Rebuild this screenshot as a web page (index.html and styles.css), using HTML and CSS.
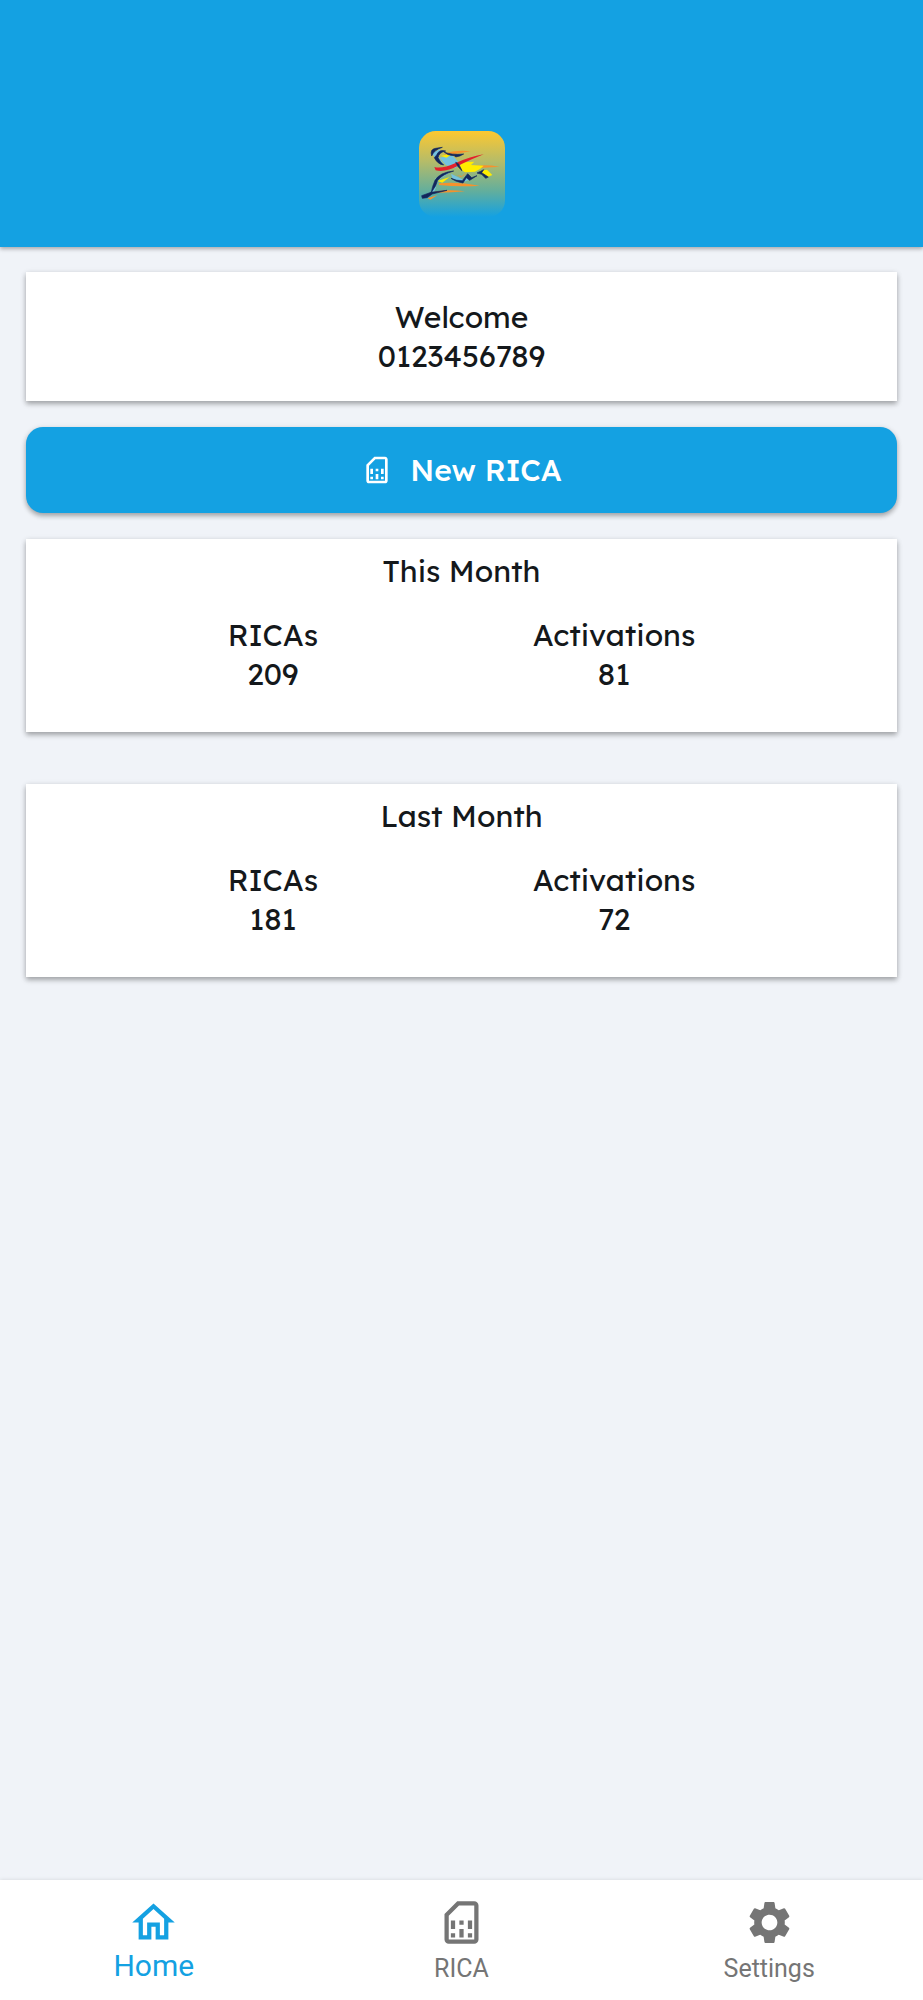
FILE: index.html
```html
<!DOCTYPE html>
<html lang="en">
  <head>
    <meta charset="utf-8">
    <meta name="viewport" content="width=device-width, initial-scale=1">
    <title>RICA</title>
    <link rel="stylesheet" href="styles.css">
  </head>
  <body>
    <div class="wrapper">

      <header class="header">
        <svg class="logo" viewBox="0 0 258 258" role="img" aria-label="Logo">
          <defs>
            <linearGradient id="logo_bg" x1="0" y1="0" x2="0" y2="1">
              <stop offset="0" stop-color="#fdc830"/>
              <stop offset=".35" stop-color="#b6bc68"/>
              <stop offset=".7" stop-color="#62ae9d"/>
              <stop offset="1" stop-color="#14a1e2"/>
            </linearGradient>
          </defs>
          <rect width="258" height="258" rx="50" fill="url(#logo_bg)"/>
          <!-- motion lines -->
          <g fill="#f6922c">
            <path d="M74 69 Q110 56 155 61 L90 72Z"/>
            <path d="M145 108 Q190 98 242 107 L170 112Z"/>
            <path d="M60 157 Q120 152 182 164 Q120 168 60 162Z"/>
            <path d="M46 182 Q90 174 138 181 Q90 186 46 185Z"/>
            <path d="M26 202 L56 192 L34 206Z"/>
          </g>
          <!-- body -->
          <g fill="#74c2df">
            <path d="M38 66 L64 54 L58 78 L76 102 L56 92Z"/>
            <path d="M62 80 L100 73 L124 100 L108 112 L80 102Z"/>
            <path d="M94 124 L58 146 L46 182 L36 180 L50 142 L74 126Z"/>
            <path d="M96 128 L136 148 L146 130 L152 146 L132 154 L100 142Z"/>
          </g>
          <g fill="#ffed00">
            <path d="M132 94 L166 92 L156 102 L194 104 L184 113 L168 122 L138 124 L116 110Z"/>
            <path d="M182 119 L204 116 L220 132 L206 138 L184 128Z"/>
            <path d="M56 150 L92 138 L70 155Z"/>
            <path d="M66 74 L100 69 L82 80Z"/>
          </g>
          <path d="M46 108 Q70 114 110 96 Q150 78 194 70 Q158 84 120 103 Q78 126 50 118Z" fill="#e3202b"/>
          <path d="M114 132 L126 138 L144 122 L132 136Z" fill="#f6922c"/>
          <g fill="#12265c" stroke="#12265c" stroke-width="2" stroke-linejoin="round">
            <path d="M38 75 Q32 54 50 52 L70 49 Q46 56 38 75Z"/>
            <path d="M53 72 Q60 54 80 60 Q60 64 57 80 Q64 94 74 102 Q56 100 46 80Z"/>
            <path d="M74 62 Q96 73 134 69 Q124 76 110 78 L106 74 Q86 74 74 62Z"/>
            <path d="M110 94 L118 98 Q124 108 129 119 Q116 110 110 94Z"/>
            <path d="M48 148 Q62 124 104 120 Q70 130 56 148 L50 164 L36 186 Q40 166 48 148Z"/>
            <path d="M36 184 L84 178 L40 189 L24 200 L10 202 L8 194Z"/>
            <path d="M96 142 Q112 150 130 149 L146 128 L158 140 L174 134 L152 148 L142 140 L132 156 Q108 152 96 142Z"/>
            <path d="M174 126 L194 116 L188 125 L208 138 L200 142 L188 130Z"/>
          </g>
        </svg>
      </header>

      <main class="content">
        <section class="card card_welcome">
          <div>Welcome</div>
          <div>0123456789</div>
        </section>

        <button type="button" class="btn_new">
          <svg class="btn_icon" viewBox="0 0 24 24" aria-hidden="true">
            <path fill="currentColor" fill-rule="evenodd" d="M18 2h-8L4 8v12c0 1.100.9 2 2 2h12c1.100 0 2-.9 2-2V4c0-1.100-.9-2-2-2zm0 2v16H6V8.830L10.830 4H18zM7 17h2v2H7zM15 17h2v2h-2zM7 11h2v4H7zM11 15h2v4h-2zM11 11h2v2h-2zM15 11h2v4h-2z"/>
          </svg>
          New RICA
        </button>

        <section class="card">
          <h2 class="card_title">This Month</h2>
          <div class="stats">
            <div class="stat">
              <div>RICAs</div>
              <div>209</div>
            </div>
            <div class="stat">
              <div>Activations</div>
              <div>81</div>
            </div>
          </div>
        </section>

        <section class="card card_last">
          <h2 class="card_title">Last Month</h2>
          <div class="stats">
            <div class="stat">
              <div>RICAs</div>
              <div>181</div>
            </div>
            <div class="stat">
              <div>Activations</div>
              <div>72</div>
            </div>
          </div>
        </section>
      </main>

      <nav class="tabs">
        <a href="#home" class="tab active" aria-current="page">
          <svg class="tab_icon" viewBox="0 0 24 24" aria-hidden="true">
            <path fill="currentColor" d="M12 5.690l5 4.500V18h-2v-6H9v6H7v-7.810l5-4.500M12 3L2 12h3v8h6v-6h2v6h6v-8h3L12 3z"/>
          </svg>
          <span class="tab_label">Home</span>
        </a>
        <a href="#rica" class="tab">
          <svg class="tab_icon" viewBox="0 0 24 24" aria-hidden="true">
            <path fill="currentColor" fill-rule="evenodd" d="M18 2h-8L4 8v12c0 1.100.9 2 2 2h12c1.100 0 2-.9 2-2V4c0-1.100-.9-2-2-2zm0 2v16H6V8.830L10.830 4H18zM7 17h2v2H7zM15 17h2v2h-2zM7 11h2v4H7zM11 15h2v4h-2zM11 11h2v2h-2zM15 11h2v4h-2z"/>
          </svg>
          <span class="tab_label">RICA</span>
        </a>
        <a href="#settings" class="tab">
          <svg class="tab_icon" viewBox="0 0 24 24" aria-hidden="true">
            <path fill="currentColor" d="M19.140 12.940c.04-.3.06-.61.06-.94 0-.32-.02-.64-.07-.94l2.030-1.580c.18-.14.23-.41.12-.61l-1.920-3.320c-.12-.22-.37-.29-.59-.22l-2.390.96c-.5-.38-1.030-.7-1.620-.94l-.36-2.540c-.04-.24-.24-.41-.48-.41h-3.840c-.24 0-.43.17-.47.41l-.36 2.540c-.59.24-1.130.57-1.620.94l-2.390-.96c-.22-.08-.47 0-.59.22L2.740 8.870c-.12.21-.08.47.12.61l2.030 1.580c-.05.3-.09.63-.09.94s.02.64.07.94l-2.030 1.580c-.18.14-.23.41-.12.61l1.920 3.320c.12.22.37.29.59.22l2.390-.96c.5.38 1.030.7 1.620.94l.36 2.540c.05.24.24.41.48.41h3.840c.24 0 .44-.17.47-.41l.36-2.540c.59-.24 1.130-.56 1.620-.94l2.390.96c.22.08.47 0 .59-.22l1.920-3.320c.12-.22.07-.47-.12-.61l-2.010-1.580zM12 15.700c-2.040 0-3.700-1.660-3.700-3.700s1.660-3.700 3.700-3.700 3.700 1.660 3.700 3.700-1.660 3.700-3.700 3.700z"/>
          </svg>
          <span class="tab_label">Settings</span>
        </a>
      </nav>

    </div>
  </body>
</html>
```
FILE: styles.css
```css
html, body{
  margin: 0;
  padding: 0;
  height: 100%;
}
body{
  font-family: "Lexend Deca", Lexend, "Noto Sans", sans-serif;
  font-size: 30px;
  line-height: 39px;
  color: #14181b;
  background-color: #f0f3f8;
}
.wrapper{
  min-height: 100%;
  display: flex;
  flex-direction: column;
}
.header{
  display: flex;
  justify-content: center;
  padding: 131px 0 30px;
  background: #14a1e2;
  box-shadow: 0 2px 4px rgba(0, 0, 0, .3);
}
.logo{
  width: 86px;
  height: 86px;
}
.content{
  flex: 1;
  display: flex;
  flex-direction: column;
  gap: 26px;
  padding: 25px 26px;
}
.card{
  padding: 13px 0 38px;
  background: #ffffff;
  text-align: center;
  box-shadow: 0 3px 5px rgba(0, 0, 0, .28), 0 1px 6px rgba(0, 0, 0, .1);
}
.card_welcome{
  padding: 26px 0 25px;
}
.card_last{
  margin-top: 26px;
}
.card_title{
  margin: 0 0 25px;
  font-size: 30px;
  font-weight: 400;
}
.stats{
  display: flex;
  justify-content: space-evenly;
  gap: 13px;
}
.btn_new{
  display: flex;
  align-items: center;
  justify-content: center;
  gap: 17px;
  height: 86px;
  padding: 0;
  border: none;
  border-radius: 17px;
  background: #14a1e2;
  color: #ffffff;
  font-family: inherit;
  font-size: 30px;
  font-weight: 500;
  box-shadow: 0 3px 5px rgba(0, 0, 0, .28), 0 1px 6px rgba(0, 0, 0, .1);
  cursor: pointer;
}
.btn_icon{
  width: 32px;
  height: 32px;
}
.tabs{
  display: flex;
  padding: 17px 0 10px;
  background: #ffffff;
  box-shadow: 0 0 4px rgba(0, 0, 0, .12);
}
.tab{
  flex: 1;
  display: flex;
  flex-direction: column;
  align-items: center;
  color: #757575;
  font-family: Roboto, sans-serif;
  font-size: 25px;
  text-decoration: none;
}
.tab_icon{
  width: 51px;
  height: 51px;
}
.tab_label{
  line-height: 42px;
}
.active{
  color: #14a1e2;
  font-size: 30px;
}
.active .tab_label{
  line-height: 36px;
}
```
